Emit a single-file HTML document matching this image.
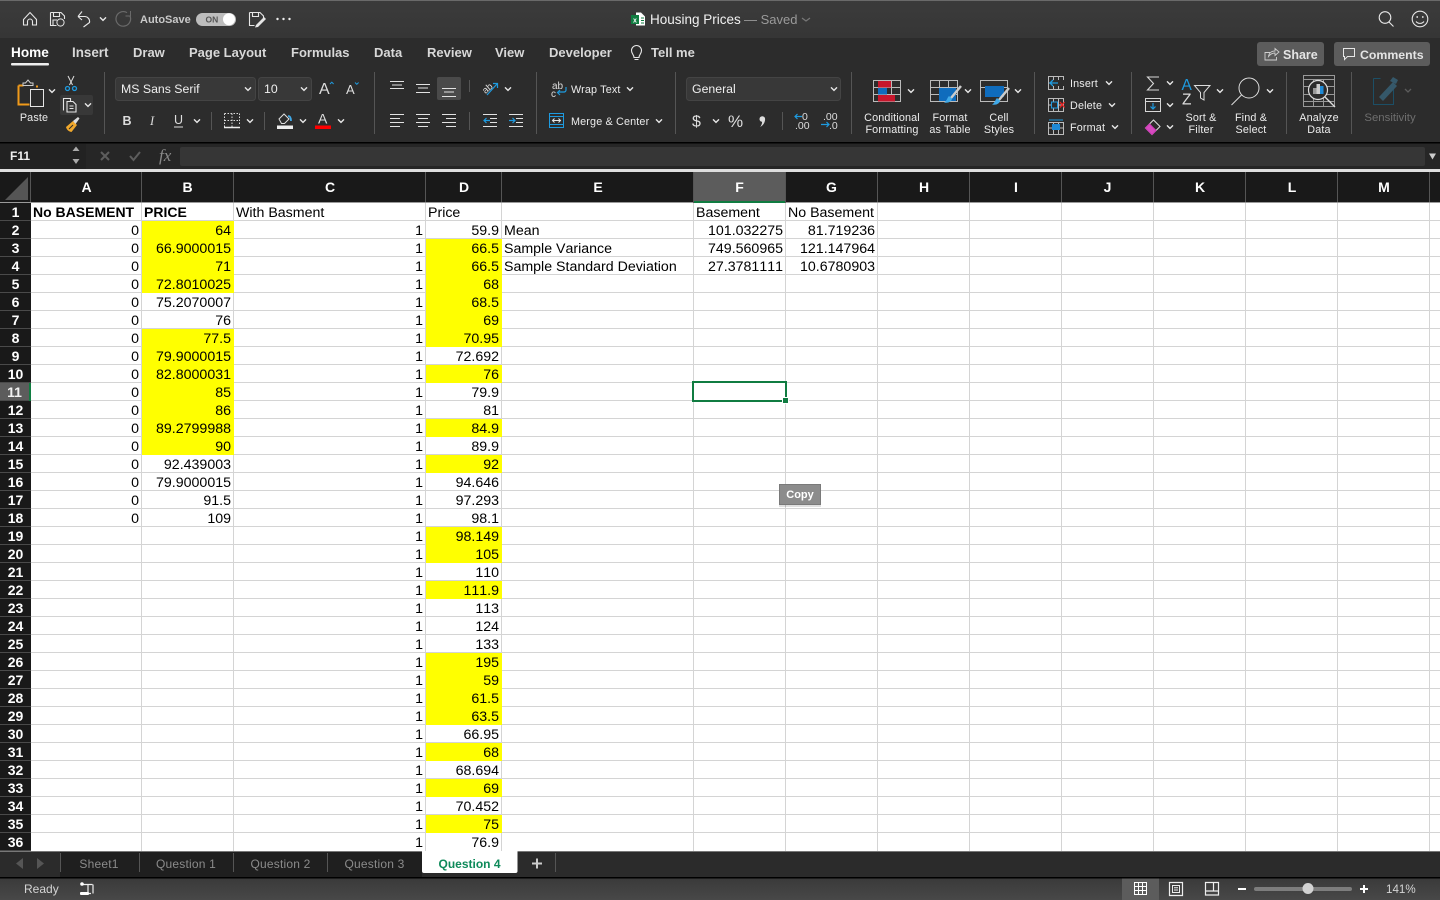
<!DOCTYPE html>
<html lang="en"><head><meta charset="utf-8"><title>Housing Prices</title>
<style>
html,body{margin:0;padding:0;width:1440px;height:900px;overflow:hidden;background:#fff}
body{position:relative;font-family:"Liberation Sans",Arial,sans-serif}
#lines{position:absolute;left:0;top:0;width:1440px;height:900px}
#sheet{position:absolute;left:0;top:203px;border-collapse:separate;border-spacing:0;table-layout:fixed;width:878px;font-size:14.2px;color:#000;font-kerning:none}
#sheet td,#sheet th{height:18px;padding:2px 3px 0 2px;box-sizing:border-box;line-height:16px;white-space:nowrap;overflow:visible;text-align:right;font-weight:normal;vertical-align:top}
#sheet th{background:#191919;color:#fff;font-weight:bold;text-align:center;padding:0;line-height:17px;vertical-align:middle;box-shadow:inset 0 -1px #4a4a4a;font-size:14px;font-kerning:auto}
#sheet td.l{text-align:left}
#sheet td.b{text-align:left;font-weight:bold;font-size:14px;padding-top:1px;line-height:17px}
#sheet td.y{background:#ff0}
#sheet th.s{background:#5c5c5c;color:#f2f2f2;border-right:2px solid #107c41}
#chrome{position:absolute;left:0;top:0;width:1440px;height:900px}
#chrome text{font-family:"Liberation Sans",Arial,sans-serif}
.tab{font-size:13px;fill:#d8d8d8;font-weight:bold}
.r{font-size:10.8px;fill:#ececec;text-anchor:middle;letter-spacing:.15px}
.m{font-size:10.8px;fill:#ececec;letter-spacing:.15px}
.h{font-size:14px;fill:#fff;font-weight:bold;text-anchor:middle}
.st{font-size:12px;fill:#8b8b8b;text-anchor:middle;letter-spacing:.2px}
.ln{fill:none;stroke:#e6e6e6;stroke-width:1.1}
</style></head><body>
<svg id="lines" viewBox="0 0 1440 900">
<path d="M141.5 203V851M233.5 203V851M425.5 203V851M501.5 203V851M693.5 203V851M785.5 203V851M877.5 203V851M969.5 203V851M1061.5 203V851M1153.5 203V851M1245.5 203V851M1337.5 203V851M1429.5 203V851" stroke="#d4d4d4" fill="none"/>
<path d="M31 220.5H1440M31 238.5H1440M31 256.5H1440M31 274.5H1440M31 292.5H1440M31 310.5H1440M31 328.5H1440M31 346.5H1440M31 364.5H1440M31 382.5H1440M31 400.5H1440M31 418.5H1440M31 436.5H1440M31 454.5H1440M31 472.5H1440M31 490.5H1440M31 508.5H1440M31 526.5H1440M31 544.5H1440M31 562.5H1440M31 580.5H1440M31 598.5H1440M31 616.5H1440M31 634.5H1440M31 652.5H1440M31 670.5H1440M31 688.5H1440M31 706.5H1440M31 724.5H1440M31 742.5H1440M31 760.5H1440M31 778.5H1440M31 796.5H1440M31 814.5H1440M31 832.5H1440" stroke="#d4d4d4" fill="none"/>
</svg>
<table id="sheet">
<colgroup><col style="width:31px"><col style="width:111px"><col style="width:92px"><col style="width:192px"><col style="width:76px"><col style="width:192px"><col style="width:92px"><col style="width:92px"></colgroup>
<tr><th>1<td class="b">No BASEMENT<td class="b">PRICE<td class="l">With Basment<td class="l">Price<td class="l"><td class="l">Basement<td class="l">No Basement
<tr><th>2<td>0<td class="y">64<td>1<td>59.9<td class="l">Mean<td>101.032275<td>81.719236
<tr><th>3<td>0<td class="y">66.9000015<td>1<td class="y">66.5<td class="l">Sample Variance<td>749.560965<td>121.147964
<tr><th>4<td>0<td class="y">71<td>1<td class="y">66.5<td class="l">Sample Standard Deviation<td>27.3781111<td>10.6780903
<tr><th>5<td>0<td class="y">72.8010025<td>1<td class="y">68
<tr><th>6<td>0<td>75.2070007<td>1<td class="y">68.5
<tr><th>7<td>0<td>76<td>1<td class="y">69
<tr><th>8<td>0<td class="y">77.5<td>1<td class="y">70.95
<tr><th>9<td>0<td class="y">79.9000015<td>1<td>72.692
<tr><th>10<td>0<td class="y">82.8000031<td>1<td class="y">76
<tr><th class="s">11<td>0<td class="y">85<td>1<td>79.9
<tr><th>12<td>0<td class="y">86<td>1<td>81
<tr><th>13<td>0<td class="y">89.2799988<td>1<td class="y">84.9
<tr><th>14<td>0<td class="y">90<td>1<td>89.9
<tr><th>15<td>0<td>92.439003<td>1<td class="y">92
<tr><th>16<td>0<td>79.9000015<td>1<td>94.646
<tr><th>17<td>0<td>91.5<td>1<td>97.293
<tr><th>18<td>0<td>109<td>1<td>98.1
<tr><th>19<td><td><td>1<td class="y">98.149
<tr><th>20<td><td><td>1<td class="y">105
<tr><th>21<td><td><td>1<td>110
<tr><th>22<td><td><td>1<td class="y">111.9
<tr><th>23<td><td><td>1<td>113
<tr><th>24<td><td><td>1<td>124
<tr><th>25<td><td><td>1<td>133
<tr><th>26<td><td><td>1<td class="y">195
<tr><th>27<td><td><td>1<td class="y">59
<tr><th>28<td><td><td>1<td class="y">61.5
<tr><th>29<td><td><td>1<td class="y">63.5
<tr><th>30<td><td><td>1<td>66.95
<tr><th>31<td><td><td>1<td class="y">68
<tr><th>32<td><td><td>1<td>68.694
<tr><th>33<td><td><td>1<td class="y">69
<tr><th>34<td><td><td>1<td>70.452
<tr><th>35<td><td><td>1<td class="y">75
<tr><th>36<td><td><td>1<td>76.9
</table>
<svg id="chrome" viewBox="0 0 1440 900">
<defs>
<linearGradient id="tb" x1="0" y1="0" x2="0" y2="1"><stop offset="0" stop-color="#3b3b3b"/><stop offset="1" stop-color="#363636"/></linearGradient>
<linearGradient id="sb" x1="0" y1="0" x2="0" y2="1"><stop offset="0" stop-color="#3a3a3a"/><stop offset="1" stop-color="#484848"/></linearGradient>
<path id="c" d="M-3-1.6 0 1.4 3-1.6" fill="none" stroke="#e6e6e6" stroke-width="1.4"/>
</defs>

<!-- title bar -->
<rect width="1440" height="38" fill="url(#tb)"/>
<rect width="1440" height="1" fill="#6a6a6a"/>
<rect y="38" width="1440" height="104" fill="#2c2c2c"/>
<rect y="142" width="1440" height="1.5" fill="#000"/>
<rect y="143.5" width="1440" height="25.5" fill="#262626"/>
<rect y="169" width="1440" height="3" fill="#dedede"/>

<path class="ln" d="M23.5 19.5 30 12.5l6.5 7v5.5h-4v-3.5a2.5 2.5 0 0 0-5 0V25h-4z"/>
<path class="ln" d="M50.5 12.5h10.5l3.5 3.5v3M50.5 12.5v13h6M53.5 12.5v4h6v-4M53 25v-5h4"/>
<circle cx="60.5" cy="22.5" r="3.6" fill="#3a3a3a" stroke="#e6e6e6"/>
<path class="ln" d="M78 16.5h7a5 5 0 0 1 4.5 6l-6 4.5M78 16.5l4-5M78 16.5l4 3.5"/>
<use href="#c" x="103" y="19"/>
<path d="M130 16a7.3 7.3 0 1 1-3-3.4" fill="none" stroke="#6a6a6a" stroke-width="1.2"/><path d="M130.5 11v5h-5" fill="none" stroke="#6a6a6a"/>
<text x="140" y="23" font-size="11" font-weight="bold" fill="#c9c9c9">AutoSave</text>
<rect x="196" y="13" width="40" height="13" rx="6.5" fill="#bdbdbd"/>
<text x="205.500" y="22.500" font-size="8.500" font-weight="bold" fill="#555">ON</text>
<circle cx="229" cy="19.300" r="6" fill="#fff"/>
<path class="ln" d="M249.500 12.500h10.500l3.500 3.500v2M249.500 12.500v13h5M252.500 12.500v4h6v-4"/>
<path d="M256 25l8-8 2 2-8 8-3 .5z" fill="#e6e6e6"/>
<circle cx="277.500" cy="19" r="1.200" fill="#eee"/><circle cx="283.500" cy="19" r="1.200" fill="#eee"/><circle cx="289.500" cy="19" r="1.200" fill="#eee"/>

<path d="M636 12.500h5l4 4V25.500h-9z" fill="#fff"/><rect x="631" y="15" width="8" height="9" fill="#107c41"/><path d="M641 18h3M641 20.500h3M641 23h3" stroke="#107c41"/>
<text x="633" y="22.500" font-size="7" font-weight="bold" fill="#fff">x</text>
<text x="650" y="24" font-size="13.500" fill="#f0f0f0">Housing Prices</text>
<text x="744" y="24" font-size="13" fill="#9a9a9a">— Saved</text>
<path d="M802 18l4 3 4-3" fill="none" stroke="#777" stroke-width="1.2"/>
<circle cx="1385" cy="17.500" r="5.800" class="ln"/><path class="ln" d="M1389 22l4.500 4.500"/>
<circle cx="1420" cy="19" r="7.800" class="ln"/><circle cx="1417.200" cy="17" r=".9" fill="#eee"/><circle cx="1422.800" cy="17" r=".9" fill="#eee"/><path class="ln" d="M1416 21.500c2 2.500 6 2.500 8 0"/>

<!-- tabs -->
<text class="tab" x="11" y="57" style="fill:#fff;font-size:13.600px">Home</text>
<rect x="11" y="63" width="38" height="2.500" rx="1" fill="#eee"/>
<text class="tab" x="72" y="57" style="font-size:13.400px">Insert</text>
<text class="tab" x="133" y="57">Draw</text>
<text class="tab" x="189" y="57">Page Layout</text>
<text class="tab" x="291" y="57">Formulas</text>
<text class="tab" x="374" y="57">Data</text>
<text class="tab" x="427" y="57">Review</text>
<text class="tab" x="495" y="57">View</text>
<text class="tab" x="549" y="57">Developer</text>
<path class="ln" d="M634 57.500c0-3-2.500-3.500-2.500-7a5 5 0 0 1 10 0c0 3.500-2.500 4-2.500 7zM634.500 59.500h4"/>
<text class="tab" x="651" y="57">Tell me</text>
<rect x="1257" y="42" width="67" height="24" rx="3" fill="#5c5c5c"/>
<path d="M1270 52.500h-5v7.500h11.500v-3M1268.500 56.500c.5-3.500 3-5.500 6.500-5.500v-2.500l4 3.500-4 3.500v-2.500c-2.500 0-4.500 1-6.500 3.500z" fill="none" stroke="#cfcfcf" stroke-width=".9"/>
<text x="1283" y="59" font-size="12.500" font-weight="bold" fill="#e4e4e4">Share</text>
<rect x="1334" y="42" width="96" height="24" rx="3" fill="#5c5c5c"/>
<path d="M1343.500 48.500h11v8h-7l-3 3v-3h-1z" fill="none" stroke="#e6e6e6"/>
<text x="1360" y="59" font-size="12.300" font-weight="bold" fill="#e4e4e4">Comments</text>

<!-- separators -->
<path d="M104.500 72V134M211.500 112V130M264.500 112V130M374.500 72V134M469.500 80V92M469.500 112V130M536.500 72V134M675.500 72V134M782.500 112V130M851.500 72V134M1034.500 72V134M1131.500 72V134M1286.500 72V134M1351.500 72V134" stroke="#555"/>

<!-- paste -->
<path d="M18.500 85.500h5M37 85.500v2M18.500 85.500V104.500h11" fill="none" stroke="#f09a1a" stroke-width="2"/>
<path d="M23 85v-2h2.500l2.500-3 2.500 3H33v2.500h-10z" fill="none" stroke="#cfcfcf"/>
<rect x="30.500" y="89.500" width="13" height="17" fill="#2c2c2c" stroke="#e6e6e6"/>
<use href="#c" x="52" y="91"/>
<text class="r" x="34" y="121">Paste</text>
<path d="M68 76l4.500 9M74 76l-4.500 9" stroke="#ddd" fill="none"/><circle cx="67.500" cy="88.500" r="2" fill="none" stroke="#1e9be0" stroke-width="1.300"/><circle cx="74.500" cy="88.500" r="2" fill="none" stroke="#1e9be0" stroke-width="1.300"/>
<rect x="60" y="95" width="33" height="20" rx="2" fill="#383838"/>
<path class="ln" d="M63.500 110.500V98.500h7v2.500M67 101.500h6l3 3v7.500h-9zM69.500 106h4M69.500 108.500h4"/>
<use href="#c" x="88" y="105"/>
<path d="M66 127l7-6 4 4-5.500 7c-3-.5-5-2.500-5.500-5z" fill="#f0a82c"/><path d="M73 121l5-4 1.500 1.500-4 5.500z" fill="#ddd"/><path d="M69 129l4-4" stroke="#2c2c2c"/>

<!-- font -->
<rect x="115.500" y="77.500" width="140" height="23" rx="3" fill="#383838" stroke="#444"/>
<text x="121" y="93" font-size="12.300" fill="#efefef">MS Sans Serif</text>
<use href="#c" x="248" y="89"/>
<rect x="258.500" y="77.500" width="53" height="23" rx="3" fill="#383838" stroke="#444"/>
<text x="264" y="93" font-size="12.300" fill="#efefef">10</text>
<use href="#c" x="304" y="89"/>
<text x="319" y="94" font-size="16" fill="#ddd">A</text><path d="M330 84l1.800-1.800 1.800 1.800" stroke="#1e9be0" fill="none"/>
<text x="346" y="94" font-size="13" fill="#ddd">A</text><path d="M355 82.500l1.800 1.800 1.800-1.800" stroke="#1e9be0" fill="none"/>
<text x="122.500" y="125" font-size="12.500" font-weight="bold" fill="#ddd">B</text>
<text x="150" y="125" font-size="12.500" font-style="italic" fill="#ddd" style="font-family:'Liberation Serif',serif">I</text>
<text x="174" y="124" font-size="12.500" fill="#ddd">U</text><path d="M174 127h9" stroke="#ddd"/>
<use href="#c" x="197" y="121"/>
<path d="M224.500 113.500h15v12M224.500 113.500v14h15M232 113.500v14M224.500 120.500h15" fill="none" stroke="#ddd" stroke-dasharray="1.500 1.500"/><path d="M224 127.500h16" stroke="#eee" stroke-width="1.500"/>
<use href="#c" x="250" y="121"/>
<path d="M279 119l5-5 5 5-4.500 4.500h-3z" fill="none" stroke="#ddd"/><path d="M288 116c2 0 3 2 3 5" stroke="#3fa9e8" stroke-width="1.800" fill="none"/>
<rect x="277" y="125.500" width="16" height="3.500" fill="#eee"/>
<use href="#c" x="303" y="121"/>
<text x="318" y="123.500" font-size="14" fill="#ddd">A</text>
<rect x="315" y="125.500" width="16" height="3.500" fill="#f00"/>
<use href="#c" x="341" y="121"/>

<!-- alignment -->
<rect x="437" y="77" width="24" height="23" rx="2" fill="#4a4a4a"/>
<path d="M390 81.500h14M392 85h10M390 88.500h14M416 84.500h14M418 88h10M416 92.500h14M442 88.500h14M444 92h10M442 96.500h14" stroke="#e2e2e2" fill="none"/>
<path d="M390 114.500h14M390 118.500h10M390 122.500h14M390 126.500h10M416 114.500h14M418 118.500h10M416 122.500h14M418 126.500h10M442 114.500h14M446 118.500h10M442 122.500h14M446 126.500h10" stroke="#e2e2e2" fill="none"/>
<text x="482" y="91" font-size="9.500" fill="#ddd" transform="rotate(-40 488 88)">ab</text><path d="M487 95l10-11M493 83.500h4.500v4.500" stroke="#1e9be0" fill="none" stroke-width="1.200"/>
<use href="#c" x="508" y="89"/>
<path d="M490 118.500h7M490 122.500h7M483 126.500h14" stroke="#e2e2e2" fill="none"/><path d="M490 120.500h-6m2.500-2.500-2.500 2.500 2.500 2.500" stroke="#1e9be0" fill="none" stroke-width="1.200"/><path d="M483 114.500h14" stroke="#e2e2e2"/>
<path d="M509 114.500h14M516 118.500h7M516 122.500h7M509 126.500h14" stroke="#e2e2e2" fill="none"/><path d="M509 120.500h6m-2.500-2.500 2.500 2.500-2.500 2.500" stroke="#1e9be0" fill="none" stroke-width="1.200"/>

<!-- wrap/merge -->
<text x="552" y="89" font-size="10" fill="#ddd">ab</text><text x="551" y="97" font-size="10" fill="#ddd">c</text>
<path d="M566 87v3a2 2 0 0 1-2 2h-6m2-2-2.500 2.500 2.500 2.500" stroke="#1e9be0" fill="none" stroke-width="1.200"/>
<text class="m" x="571" y="93">Wrap Text</text><use href="#c" x="630" y="89"/>
<rect x="549.500" y="113.500" width="14" height="14" fill="none" stroke="#1e9be0"/><path d="M549.500 116.500h14M549.500 124.500h14" stroke="#1e9be0" fill="none"/><path d="M552.500 120.500h8M554.500 118.500l-2 2 2 2M558.500 118.500l2 2-2 2" stroke="#e6e6e6" fill="none"/>
<text class="m" x="571" y="125">Merge &amp; Center</text><use href="#c" x="659" y="121"/>

<!-- number -->
<rect x="686.500" y="77.500" width="154" height="23" rx="3" fill="#383838" stroke="#444"/>
<text x="692" y="93" font-size="12.300" fill="#efefef">General</text>
<use href="#c" x="834" y="89"/>
<text x="692" y="126.500" font-size="16" fill="#ddd">$</text><use href="#c" x="716" y="121"/>
<text x="728" y="127" font-size="17" fill="#ddd">%</text>
<path d="M759.500 119a2.800 2.800 0 1 1 5.600 0c0 3.500-2 6.500-5 8 1.200-1.500 2-3.200 2-5.300-1.500.1-2.600-1.200-2.600-2.700z" fill="#ddd"/>
<text x="802" y="120" font-size="10.500" fill="#ddd">0</text><text x="795" y="129" font-size="10.500" fill="#ddd">.00</text>
<path d="M802 116.500h-7m2.500-2.500-2.500 2.500 2.500 2.500" stroke="#1e9be0" fill="none" stroke-width="1.200"/>
<text x="823" y="120" font-size="10.500" fill="#ddd">.00</text><text x="829" y="129" font-size="10.500" fill="#ddd">.0</text>
<path d="M821 124.500h8m-2.500-2.500 2.500 2.500-2.500 2.500" stroke="#1e9be0" fill="none" stroke-width="1.200"/>

<!-- styles -->
<path d="M873.500 80.500h27v21h-27zM873.500 87.500h27M873.500 94.500h27M882.500 80.500v21M891.500 80.500v21" fill="none" stroke="#bbb"/>
<rect x="878" y="81" width="13" height="6.500" fill="#c8162c"/><rect x="878" y="88" width="9" height="6.500" fill="#0f6cbd"/><rect x="878" y="95" width="17" height="6.500" fill="#c8162c"/>
<use href="#c" x="911" y="91"/>
<text class="r" x="892" y="121">Conditional</text><text class="r" x="892" y="133">Formatting</text>
<path d="M930.500 80.500h27v21h-27zM930.500 87.500h27M930.500 94.500h27M939.500 80.500v21M948.500 80.500v21" fill="none" stroke="#bbb"/>
<rect x="939" y="88" width="17" height="13" fill="#0f6cbd"/>
<path d="M961 86l-10 12" stroke="#ccc" stroke-width="2.500"/><path d="M949 96c-2 2-2 5-5 6.500 4 1 8-1 8-4z" fill="#3fa9e8"/>
<use href="#c" x="968" y="91"/>
<text class="r" x="950" y="121">Format</text><text class="r" x="950" y="133">as Table</text>
<path d="M980.500 80.500h27v21h-27zM980.500 87.500h27" fill="none" stroke="#bbb"/>
<rect x="985" y="86" width="19" height="11" fill="#0f6cbd"/>
<path d="M1009 88l-10 12" stroke="#ccc" stroke-width="2.500"/><path d="M997 98c-2 2-2 5-5 6.500 4 1 8-1 8-4z" fill="#3fa9e8"/>
<use href="#c" x="1018" y="91"/>
<text class="r" x="999" y="121">Cell</text><text class="r" x="999" y="133">Styles</text>

<!-- cells -->
<path d="M1048.500 76.500h15v13h-15zM1048.500 83h15M1053.500 76.500v13M1058.500 76.500v13" fill="none" stroke="#bbb"/>
<rect x="1052" y="80" width="12" height="6" fill="#2c2c2c"/><path d="M1058 83h-8m3-3-3 3 3 3" stroke="#1e9be0" fill="none" stroke-width="1.300"/>
<text class="m" x="1070" y="87">Insert</text><use href="#c" x="1109" y="83"/>
<path d="M1048.500 98.500h15v13h-15zM1048.500 105h15M1053.500 98.500v13M1058.500 98.500v13" fill="none" stroke="#bbb"/>
<rect x="1051.500" y="102" width="6" height="6" fill="#2c2c2c" stroke="#1e9be0"/><path d="M1060 102l4.500 5.500M1064.500 102l-4.500 5.500" stroke="#e22" stroke-width="1.300"/>
<text class="m" x="1070" y="109">Delete</text><use href="#c" x="1112" y="105"/>
<path d="M1048.500 122.500h15v12h-15zM1048.500 128h15M1053.500 122.500v12M1058.500 122.500v12" fill="none" stroke="#bbb"/>
<rect x="1052" y="124" width="8" height="6" fill="#1e8ad6"/><path d="M1049 120h14" stroke="#1e9be0"/>
<text class="m" x="1070" y="131">Format</text><use href="#c" x="1115" y="127"/>

<!-- editing -->
<path d="M1159 77h-11.500l6 6.500-6 6.500h11.500" fill="none" stroke="#d8d8d8" stroke-width="1.100"/><use href="#c" x="1170" y="83"/>
<path d="M1145.500 98.500h15v13h-15zM1145.500 101.500h15" fill="none" stroke="#d8d8d8"/><path d="M1153 103v6m-2.500-2.500 2.500 2.500 2.500-2.500" stroke="#1e9be0" fill="none" stroke-width="1.200"/><use href="#c" x="1170" y="105"/>
<path d="M1145.500 128l8-8 6.500 6.500-8 8z" fill="none" stroke="#e0e0e0" stroke-width="1"/><path d="M1145.500 128l4-4 6.500 6.500-4 4z" fill="#d64ac0" stroke="#d03ab8"/><use href="#c" x="1170" y="127"/>
<text x="1181.500" y="90" font-size="15.500" fill="#1e9be0">A</text>
<text x="1182" y="104.500" font-size="15.500" fill="#ddd">Z</text>
<path d="M1194.500 85.500h15.500l-6 7v7.500l-3.500-2v-5.500z" fill="none" stroke="#ddd"/>
<use href="#c" x="1220" y="91"/>
<text class="r" x="1201" y="121">Sort &amp;</text><text class="r" x="1201" y="133">Filter</text>
<circle cx="1249" cy="88" r="10" fill="none" stroke="#ddd"/><path d="M1241.500 95l-10 10" stroke="#ddd"/>
<use href="#c" x="1270" y="91"/>
<text class="r" x="1251" y="121">Find &amp;</text><text class="r" x="1251" y="133">Select</text>
<path d="M1303.500 75.500h31v31h-31zM1303.500 79.500h31M1303.500 86.500h31M1303.500 94.500h31M1303.500 101.500h31M1313.500 79.500v27M1323.500 79.500v27" fill="none" stroke="#999"/>
<circle cx="1318" cy="90" r="9.500" fill="#2c2c2c" stroke="#ddd" stroke-width="1.200"/>
<rect x="1313" y="88" width="3.500" height="6" fill="#999"/><rect x="1316.500" y="84" width="3.500" height="10" fill="#ccc"/><rect x="1320" y="86" width="3.500" height="8" fill="#1e8ad6"/>
<path d="M1325 97l10 10" stroke="#ddd" stroke-width="1.300"/>
<text class="r" x="1319" y="121">Analyze</text><text class="r" x="1319" y="133">Data</text>
<path d="M1373.500 78.500h7M1373.500 78.500v26h20v-16" fill="none" stroke="#1c4f66"/>
<path d="M1379 97l14-15 4 4-14 15z" fill="#35586a"/><path d="M1390 81l3-4 5 3-2 4z" fill="#35586a"/>
<path d="M1405 89l3 3 3-3" fill="none" stroke="#5c5c5c" stroke-width="1.300"/>
<text x="1390" y="121" font-size="11.400" fill="#6e6e6e" text-anchor="middle">Sensitivity</text>

<!-- formula -->
<rect x="0" y="144" width="86" height="25" fill="#222"/>
<text x="10" y="160" font-size="12" font-weight="bold" fill="#f0f0f0">F11</text>
<path d="M72.500 151l3.500-4.500 3.500 4.500zM72.500 159l3.500 5 3.500-5z" fill="#aaa"/>
<path d="M101 152l8 8M109 152l-8 8" stroke="#5d5d5d" stroke-width="2"/>
<path d="M130 156l3.500 4 6.500-8" stroke="#5d5d5d" stroke-width="2" fill="none"/>
<text x="159" y="161" font-size="17" font-style="italic" fill="#8a8a8a" style="font-family:'Liberation Serif',serif">fx</text>
<rect x="180" y="147" width="1245" height="19" rx="2" fill="#363636"/>
<path d="M1429 153.500h7l-3.500 6z" fill="#ccc"/>

<!-- col headers -->
<rect y="172" width="1440" height="31" fill="#191919"/>
<path d="M5 200h23v-23z" fill="#555"/>
<rect x="693" y="172" width="93" height="31" fill="#5c5c5c"/>
<rect x="693" y="201" width="93" height="2" fill="#107c41"/>
<path d="M30.500 172V203M141.500 172V203M233.500 172V203M425.500 172V203M501.500 172V203M693.500 172V203M785.500 172V203M877.500 172V203M969.500 172V203M1061.500 172V203M1153.500 172V203M1245.500 172V203M1337.500 172V203M1429.500 172V203" stroke="#555"/>
<path d="M0 202.500H693M786 202.500H1440" stroke="#9a9a9a"/>
<text class="h" x="86.500" y="192">A</text><text class="h" x="187.500" y="192">B</text><text class="h" x="330" y="192">C</text><text class="h" x="464" y="192">D</text><text class="h" x="598" y="192">E</text><text class="h" x="739.500" y="192">F</text><text class="h" x="831.500" y="192">G</text><text class="h" x="924" y="192">H</text><text class="h" x="1016" y="192">I</text><text class="h" x="1107.500" y="192">J</text><text class="h" x="1200" y="192">K</text><text class="h" x="1292" y="192">L</text><text class="h" x="1384" y="192">M</text>

<!-- selection -->
<rect x="693" y="382" width="93" height="19" fill="none" stroke="#107c41" stroke-width="2"/>
<rect x="782" y="397" width="7" height="7" fill="#fff"/><rect x="783" y="398" width="5" height="5" fill="#107c41"/>

<!-- copy tooltip -->
<rect x="779" y="485" width="42" height="21" fill="#000" opacity=".12" transform="translate(0 1)"/>
<rect x="779.500" y="484.500" width="41" height="20" fill="#8c8c8c" stroke="#7a7a7a"/>
<text x="800" y="498" font-size="11" font-weight="bold" fill="#fff" text-anchor="middle">Copy</text>

<!-- sheet tabs -->
<rect x="0" y="851" width="1440" height="26" fill="#2b2b2b"/>
<rect x="0" y="851" width="1440" height="1" fill="#777"/>
<rect x="60" y="852" width="362" height="25" fill="#1f1f1f"/>
<rect y="877" width="1440" height="1.500" fill="#000"/>
<path d="M23 858v11l-7-5.500zM37 858v11l7-5.500z" fill="#555"/>
<path d="M60.500 853V872M139.500 853V872M233.500 853V872M327.500 853V872M555.500 853V872" stroke="#555"/>
<text class="st" x="99" y="868">Sheet1</text><text class="st" x="186" y="868">Question 1</text><text class="st" x="280.500" y="868">Question 2</text><text class="st" x="374.500" y="868">Question 3</text>
<path d="M422 851h95.500v20a2 2 0 0 1-2 2H424a2 2 0 0 1-2-2z" fill="#fff"/>
<text x="469.500" y="868" font-size="12" font-weight="bold" fill="#0e8a5a" text-anchor="middle">Question 4</text>
<path d="M537 858.500v10M532 863.500h10" stroke="#ccc" stroke-width="2"/>

<!-- status bar -->
<rect y="878.500" width="1440" height="21.500" fill="url(#sb)"/>
<text x="24" y="893" font-size="12" fill="#d4d4d4">Ready</text>
<path d="M82 884.500h10.500M88 884.500v9M93 884.500v9M81 893.500h10" stroke="#eee" fill="none" stroke-width="1.200"/><circle cx="82" cy="884" r="1.800" fill="#fff"/><rect x="80" y="892" width="9" height="3" rx="1" fill="#fff"/>
<rect x="1122" y="878.500" width="37" height="21.500" fill="#5c5c5c"/>
<path d="M1134.500 882.500h12v12h-12zM1134.500 886.500h12M1134.500 890.500h12M1138.500 882.500v12M1142.500 882.500v12" fill="none" stroke="#fff"/>
<path d="M1169.500 882.500h13v13h-13z" fill="none" stroke="#eee" stroke-width="1.200"/><path d="M1172.500 885.500h7v7h-7zM1174 887.800h4M1174 890h4" fill="none" stroke="#eee"/>
<path d="M1205.500 882.500h13v12.500h-13zM1205.500 891h8M1213.500 882.500V891M1218.500 891h-5" fill="none" stroke="#eee" stroke-width="1.200"/>
<path d="M1238 889h8M1360 889h8M1364 885v8" stroke="#fff" stroke-width="2"/>
<rect x="1254" y="887" width="98" height="4" rx="2" fill="#7d7d7d"/>
<circle cx="1308" cy="888.500" r="5.500" fill="#d2d2d2"/>
<text x="1386" y="893" font-size="11.600" fill="#d4d4d4">141%</text>
</svg>
</body></html>
